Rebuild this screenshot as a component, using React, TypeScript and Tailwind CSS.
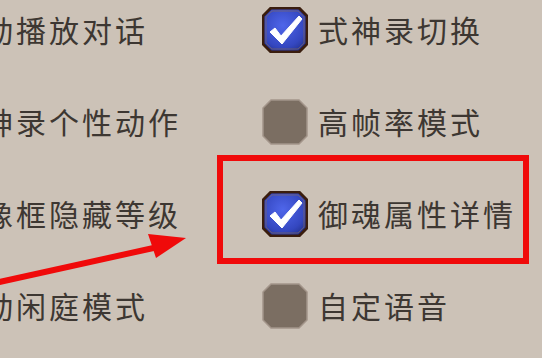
import React from "react";

const font = { fontFamily: '"Noto Sans CJK SC", "Noto Sans CJK JP", sans-serif' };

function Box({ checked }: { checked: boolean }) {
  const pts = "9,1 37,1 45,9 45,37 37,45 9,45 1,37 1,9";
  return (
    <svg width="46" height="46" viewBox="0 0 46 46" className="shrink-0">
      <defs>
        <radialGradient id="bg" cx="0.45" cy="0.4" r="0.7">
          <stop offset="0" stopColor="#4f66ea" />
          <stop offset="0.7" stopColor="#3447c0" />
          <stop offset="1" stopColor="#22308a" />
        </radialGradient>
      </defs>
      {checked ? (
        <>
          <polygon points={pts} fill="url(#bg)" stroke="#3a1d0e" strokeWidth="3" />
          <polygon points="10,4 36,4 42,10 42,36 36,42 10,42 4,36 4,10" fill="none" stroke="#8e6f55" strokeWidth="1" opacity="0.6" />
          <path d="M8 25 L13 21 L19 29 L37 9 L40 12 L20 37 Z" fill="#ffffff" stroke="#ffffff" strokeWidth="1" strokeLinejoin="round" />
        </>
      ) : (
        <polygon points={pts} fill="#7b6e62" stroke="#a3958a" strokeWidth="1.5" />
      )}
    </svg>
  );
}

const rows = [
  { left: "自动播放对话", right: "式神录切换", checked: true },
  { left: "式神录个性动作", right: "高帧率模式", checked: false },
  { left: "头像框隐藏等级", right: "御魂属性详情", checked: true },
  { left: "自动闲庭模式", right: "自定语音", checked: false },
];

export default function App() {
  return (
    <div className="relative w-[542px] h-[358px] overflow-hidden bg-[#ccc2b7]" style={font}>
      <div className="flex flex-col mt-[-16px]">
        {rows.map((r) => (
          <div key={r.right} className="flex items-center h-[92px]">
            <div className="w-[312px] ml-[-50px] shrink-0 text-[30px] tracking-[3px] text-[#3d3732] whitespace-nowrap leading-none mt-[-3px]">
              {r.left}
            </div>
            <Box checked={r.checked} />
            <div className="ml-[10px] text-[30px] tracking-[3px] text-[#3d3732] whitespace-nowrap leading-none mt-[-3px]">
              {r.right}
            </div>
          </div>
        ))}
      </div>
      <div className="absolute left-[217px] top-[155px] w-[312px] h-[109px] border-[6px] border-[#f00a0a]" />
      <svg className="absolute left-0 top-0" width="542" height="358" viewBox="0 0 542 358">
        <line x1="-5" y1="283" x2="158" y2="247" stroke="#f00a0a" strokeWidth="6" />
        <polygon points="148,234 186,238 156,258" fill="#f00a0a" />
      </svg>
    </div>
  );
}
